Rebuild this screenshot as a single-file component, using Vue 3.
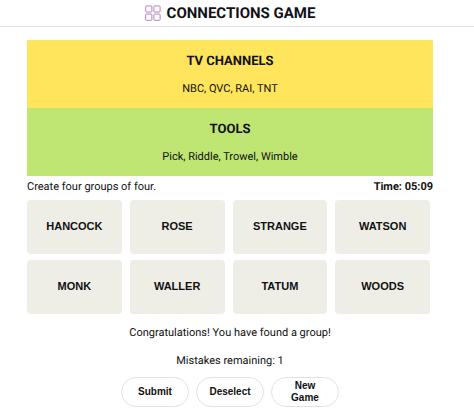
<script setup>
import { ref } from 'vue'

const solved = [
  { title: 'TV CHANNELS', words: 'NBC, QVC, RAI, TNT', tone: 'yellow' },
  { title: 'TOOLS', words: 'Pick, Riddle, Trowel, Wimble', tone: 'green' },
]
const words = ['HANCOCK', 'ROSE', 'STRANGE', 'WATSON', 'MONK', 'WALLER', 'TATUM', 'WOODS']
const selected = ref([])

function toggle(word) {
  selected.value = selected.value.includes(word)
    ? selected.value.filter((w) => w !== word)
    : selected.value.length < 4
      ? [...selected.value, word]
      : selected.value
}
</script>

<template>
  <div class="page">
    <header class="header">
      <svg class="logo" viewBox="0 0 16 16" aria-hidden="true">
        <rect x="0.7" y="0.9" width="6.2" height="6.2" rx="0.8" />
        <rect x="8.9" y="0.9" width="6.2" height="6.2" rx="0.8" />
        <rect x="0.7" y="9.1" width="6.2" height="6.2" rx="0.8" />
        <rect x="8.9" y="9.1" width="6.2" height="6.2" rx="0.8" />
      </svg>
      <h1>CONNECTIONS GAME</h1>
    </header>
    <main class="game">
      <section v-for="group in solved" :key="group.title" class="group" :class="group.tone">
        <h2>{{ group.title }}</h2>
        <p>{{ group.words }}</p>
      </section>
      <div class="status">
        <span>Create four groups of four.</span>
        <strong>Time: 05:09</strong>
      </div>
      <div class="board">
        <button
          v-for="word in words"
          :key="word"
          type="button"
          class="card"
          :class="{ selected: selected.includes(word) }"
          @click="toggle(word)"
        >
          {{ word }}
        </button>
      </div>
      <p class="message">Congratulations! You have found a group!</p>
      <p class="message">Mistakes remaining: 1</p>
      <div class="actions">
        <button type="button">Submit</button>
        <button type="button" @click="selected = []">Deselect</button>
        <button type="button">New Game</button>
      </div>
    </main>
  </div>
</template>

<style>
body {
  background: #fff;
}
</style>

<style scoped>
.page {
  font-family: Roboto, sans-serif;
  font-size: 11px;
  line-height: 14px;
  color: #111;
  text-rendering: geometricPrecision;
}
h1,
h2,
p {
  margin: 0;
}
.header {
  display: flex;
  align-items: center;
  justify-content: center;
  gap: 6px;
  height: 26px;
  padding-right: 14px;
  border-bottom: 1px solid #e2e2e4;
}
.logo {
  width: 16px;
  height: 16px;
  fill: none;
  stroke: #bb7fc4;
}
h1 {
  font-size: 15px;
  line-height: 20px;
  color: #111118;
}
.game {
  padding: 13px 41px 4px 27px;
}
.group {
  padding: 13px 8px 12px;
  text-align: center;
}
.group h2 {
  margin-bottom: 11px;
  font-size: 13px;
  line-height: 18px;
}
.yellow {
  background: #ffe55c;
}
.green {
  background: #bfe573;
}
.status {
  display: flex;
  justify-content: space-between;
  padding: 4px 0 6px;
}
.board {
  display: grid;
  grid-template-columns: repeat(4, 1fr);
  gap: 6px 8px;
  padding-right: 3px;
  margin-bottom: 12px;
}
.card {
  height: 54px;
  padding: 0 0 2px;
  border: 0;
  border-radius: 4px;
  background: #efeee6;
  color: #111;
  font: bold 11px "Liberation Sans", sans-serif;
  cursor: pointer;
}
.card.selected {
  background: #5a594e;
  color: #fff;
}
.message {
  margin-bottom: 14px;
  text-align: center;
}
.message + .actions {
  margin-top: -5px;
}
.actions {
  display: flex;
  justify-content: center;
  gap: 7px;
}
.actions button {
  width: 68px;
  height: 30px;
  padding: 0 12px;
  border: 1px solid #e2e2e6;
  border-radius: 16px;
  background: #fff;
  color: #111;
  font: bold 10px/12px "Liberation Sans", sans-serif;
  cursor: pointer;
}
</style>
